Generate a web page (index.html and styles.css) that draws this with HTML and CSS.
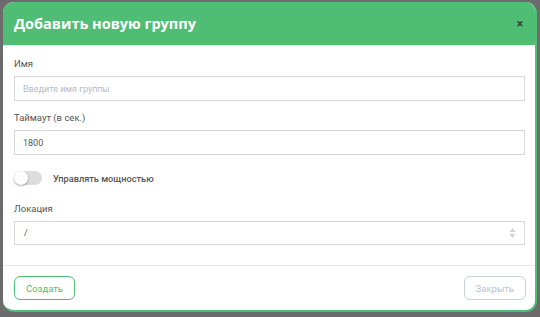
FILE: index.html
```html
<!DOCTYPE html>
<html lang="ru">
<head>
    <meta charset="UTF-8">
    <title>Добавить новую группу</title>
    <link rel="stylesheet" href="styles.css">
</head>
<body>
    <div class="backdrop">
        <div class="modal">
            <div class="modal-head">
                <h1>Добавить новую группу</h1>
                <span class="close">&times;</span>
            </div>
            <div class="modal-body">
                <div class="field">
                    <label>Имя</label>
                    <input class="input" type="text" placeholder="Введите имя группы">
                </div>
                <div class="field">
                    <label>Таймаут (в сек.)</label>
                    <input class="input" type="text" value="1800">
                </div>
                <div class="switch-row">
                    <span class="switch"><span class="knob"></span></span>
                    <span class="switch-label">Управлять мощностью</span>
                </div>
                <div class="field">
                    <label>Локация</label>
                    <div class="select">
                        <span>/</span>
                        <svg width="7" height="12" viewBox="0 0 7 12">
                            <path d="M3.5 1 L6.5 5 H0.5 Z" fill="#cfd3d8"/>
                            <path d="M3.5 11 L6.5 7 H0.5 Z" fill="#cfd3d8"/>
                        </svg>
                    </div>
                </div>
            </div>
            <div class="modal-foot">
                <button type="button" class="btn btn-green">Создать</button>
                <button type="button" class="btn btn-grey">Закрыть</button>
            </div>
        </div>
    </div>
</body>
</html>
```

FILE: styles.css
```css
body {
    margin: 0;
    background-color: #6b6b6b;
    font-family: Roboto, 'Liberation Sans', sans-serif;
}

.backdrop {
    padding: 2px 3px 5px 3px;
}

.modal {
    background-color: #fff;
    border-radius: 11px;
    border-right: 2px solid #4fbd74;
    border-bottom: 2px solid #4fbd74;
    overflow: hidden;
}

.modal-head {
    display: flex;
    justify-content: space-between;
    align-items: center;
    height: 43px;
    padding: 0 12px 0 11px;
    background-color: #4fbd74;
    border-bottom: 1px solid #e6ecef;
}

.modal-head h1 {
    margin: 0;
    color: #fff;
    font-family: 'Open Sans', sans-serif;
    font-size: 14.5px;
    font-weight: 700;
}

.close {
    color: #2b4a36;
    font-size: 12px;
    font-weight: 700;
    line-height: 1;
    margin-top: 1px;
}

.modal-body {
    padding: 11px 10px 20px 11px;
    border-bottom: 1px solid #e5e7ea;
}

.field label {
    display: block;
    font-size: 9.5px;
    color: #555;
    line-height: 14px;
    margin-bottom: 5px;
}

.input, .select {
    display: block;
    width: 100%;
    box-sizing: border-box;
    height: 25px;
    padding: 0 8px;
    border: 1px solid #d8d8d8;
    font-family: Roboto, sans-serif;
    font-size: 9px;
    color: #555;
    outline: none;
}

.input {
    margin-bottom: 10px;
}

.input::placeholder {
    color: #b5bcc7;
}

.select {
    display: flex;
    justify-content: space-between;
    align-items: center;
    height: 24px;
    padding: 0 8px 0 9px;
}

.switch-row {
    display: flex;
    align-items: center;
    gap: 11px;
    margin: 16px 0 17px 0;
}

.switch {
    position: relative;
    width: 28px;
    height: 14px;
    border-radius: 7px;
    background-color: #ddd;
}

.knob {
    position: absolute;
    left: 0;
    top: 0;
    width: 14px;
    height: 14px;
    border-radius: 50%;
    background-color: #fff;
    box-shadow: 0 1px 2px rgba(0, 0, 0, 0.35);
}

.switch-label {
    font-size: 9.2px;
    font-weight: 500;
    color: #555;
}

.modal-foot {
    display: flex;
    justify-content: space-between;
    padding: 10px 9px 10px 11px;
}

.btn {
    height: 24px;
    padding: 0 11px;
    background-color: #fff;
    border-radius: 6px;
    font-family: Roboto, sans-serif;
    font-size: 9.5px;
}

.btn-green {
    border: 1px solid #4fbd74;
    color: #4fbd74;
}

.btn-grey {
    border: 1px solid #c9cfd8;
    color: #b9c0ca;
}
```
